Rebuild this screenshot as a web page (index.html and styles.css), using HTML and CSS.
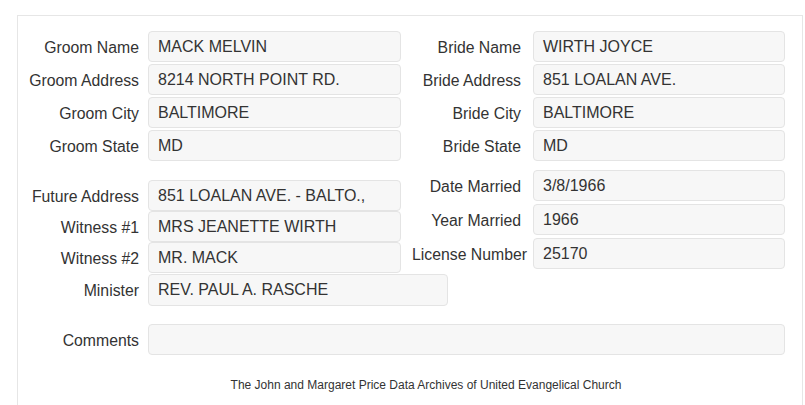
FILE: index.html
```html
<!DOCTYPE html>
<html>
<head>
<meta charset="utf-8">
<link rel="stylesheet" href="styles.css">
</head>
<body>
<div class="panel">
  <div class="top-grid">
    <div class="row">
      <label class="lbl">Groom Name</label><div class="field">MACK MELVIN</div>
      <label class="lbl lbl-r">Bride Name</label><div class="field field-r">WIRTH JOYCE</div>
    </div>
    <div class="row">
      <label class="lbl">Groom Address</label><div class="field">8214 NORTH POINT RD.</div>
      <label class="lbl lbl-r">Bride Address</label><div class="field field-r">851 LOALAN AVE.</div>
    </div>
    <div class="row">
      <label class="lbl">Groom City</label><div class="field">BALTIMORE</div>
      <label class="lbl lbl-r">Bride City</label><div class="field field-r">BALTIMORE</div>
    </div>
    <div class="row">
      <label class="lbl">Groom State</label><div class="field">MD</div>
      <label class="lbl lbl-r">Bride State</label><div class="field field-r">MD</div>
    </div>
  </div>

  <div class="mid">
    <div class="stack-left">
      <div class="row"><label class="lbl">Future Address</label><div class="field">851 LOALAN AVE. - BALTO.,</div></div>
      <div class="row"><label class="lbl">Witness #1</label><div class="field">MRS JEANETTE WIRTH</div></div>
      <div class="row"><label class="lbl">Witness #2</label><div class="field">MR. MACK</div></div>
      <div class="row row-tall"><label class="lbl">Minister</label><div class="field field-wide">REV. PAUL A. RASCHE</div></div>
    </div>
    <div class="stack-right">
      <div class="row"><label class="lbl lbl-r">Date Married</label><div class="field field-r">3/8/1966</div></div>
      <div class="row"><label class="lbl lbl-r">Year Married</label><div class="field field-r">1966</div></div>
      <div class="row"><label class="lbl lbl-r">License Number</label><div class="field field-r">25170</div></div>
    </div>
  </div>

  <div class="row comments">
    <label class="lbl">Comments</label><div class="field field-full"></div>
  </div>

  <p class="footer">The John and Margaret Price Data Archives of United Evangelical Church</p>
</div>
</body>
</html>
```

FILE: styles.css
```css
html, body {
  margin: 0;
  padding: 0;
  background: #ffffff;
}
body {
  font-family: "Liberation Sans", Arial, sans-serif;
  color: #333333;
  font-size: 16px;
}
.panel {
  margin: 15px 2px 0 17px;
  border: 1px solid #e6e6e6;
  border-bottom: none;
  padding: 15px 0 0 0;
  height: 390px;
  box-sizing: border-box;
  overflow: hidden;
}
.top-grid {
  display: flex;
  flex-direction: column;
  gap: 2px;
}
.row {
  display: flex;
  align-items: center;
  height: 31px;
}
.row-tall {
  height: 32px;
  margin-top: 1px;
}
.lbl {
  flex: none;
  width: 121px;
  margin-right: 9px;
  text-align: right;
  white-space: nowrap;
  font-size: 15.8px;
  line-height: 18px;
  padding-top: 2px;
}
.lbl-r {
  width: 109px;
  margin-left: 11px;
  margin-right: 12px;
}
.field {
  flex: none;
  box-sizing: border-box;
  width: 253px;
  height: 31px;
  padding: 0 9px;
  display: flex;
  align-items: center;
  background: #f7f7f7;
  border: 1px solid #e4e4e4;
  border-radius: 4px;
  white-space: nowrap;
  color: #333333;
}
.row-tall .field {
  height: 32px;
}
.field-r {
  width: 252px;
}
.field-wide {
  width: 300px;
}
.field-full {
  width: 637px;
}
.mid {
  display: flex;
  align-items: flex-start;
  margin-top: 9px;
}
.stack-left {
  flex: none;
  width: 383px;
  margin-top: 10px;
  display: flex;
  flex-direction: column;
  gap: 0;
}
.stack-right {
  flex: none;
  display: flex;
  flex-direction: column;
  gap: 3px;
}
.comments {
  margin-top: 18px;
}
.footer {
  margin: 23px 0 0 0;
  padding-left: 32px;
  text-align: center;
  font-size: 12px;
  line-height: 14px;
  color: #333333;
}
```
